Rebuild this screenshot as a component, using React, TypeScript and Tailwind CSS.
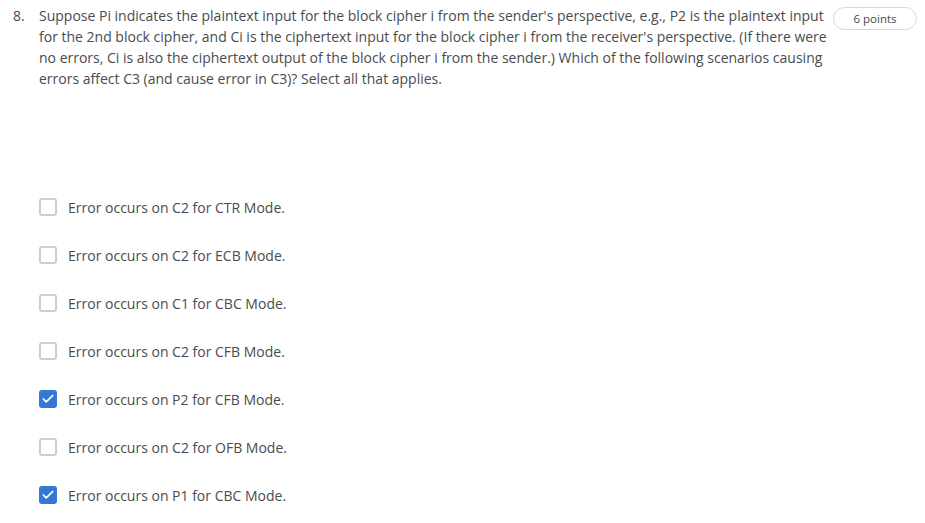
import { Check } from "lucide-react";

const options = [
  { label: "Error occurs on C2 for CTR Mode.", checked: false },
  { label: "Error occurs on C2 for ECB Mode.", checked: false },
  { label: "Error occurs on C1 for CBC Mode.", checked: false },
  { label: "Error occurs on C2 for CFB Mode.", checked: false },
  { label: "Error occurs on P2 for CFB Mode.", checked: true },
  { label: "Error occurs on C2 for OFB Mode.", checked: false },
  { label: "Error occurs on P1 for CBC Mode.", checked: true },
];

export default function App() {
  return (
    <div className="w-[925px] h-[523px] bg-white text-[#494c4e] font-['Open_Sans',sans-serif] overflow-hidden">
      <div className="flex pt-[5px] pl-[13px] pr-[8px]">
        <span className="w-[26px] shrink-0 text-[14px] leading-[21px]">8.</span>
        <p className="w-[790px] text-[14px] leading-[21px]">
          Suppose Pi indicates the plaintext input for the block cipher i from the sender's perspective, e.g., P2 is the
          plaintext input for the 2nd block cipher, and Ci is the ciphertext input for the block cipher i from the
          receiver's perspective. (If there were no errors, Ci is also the ciphertext output of the block cipher i from
          the sender.) Which of the following scenarios causing errors affect C3 (and cause error in C3)? Select all that
          applies.
        </p>
        <div className="ml-auto mt-[2px] h-[23px] w-[84px] shrink-0 rounded-full border border-[#d3d9e3] flex items-center justify-center text-[11.5px] text-[#494c4e]">
          6 points
        </div>
      </div>
      <div className="mt-[109px] pl-[39px] flex flex-col gap-[30px]">
        {options.map((o) => (
          <label key={o.label} className="flex items-center h-[18px]">
            {o.checked ? (
              <span className="w-[18px] h-[18px] rounded-[3px] bg-[#3577d4] flex items-center justify-center">
                <Check className="w-[14px] h-[14px] text-white" strokeWidth={3} />
              </span>
            ) : (
              <span className="w-[18px] h-[18px] rounded-[3px] border-2 border-[#cdd0d3] bg-white" />
            )}
            <span className="ml-[11px] text-[14px]">{o.label}</span>
          </label>
        ))}
      </div>
    </div>
  );
}
